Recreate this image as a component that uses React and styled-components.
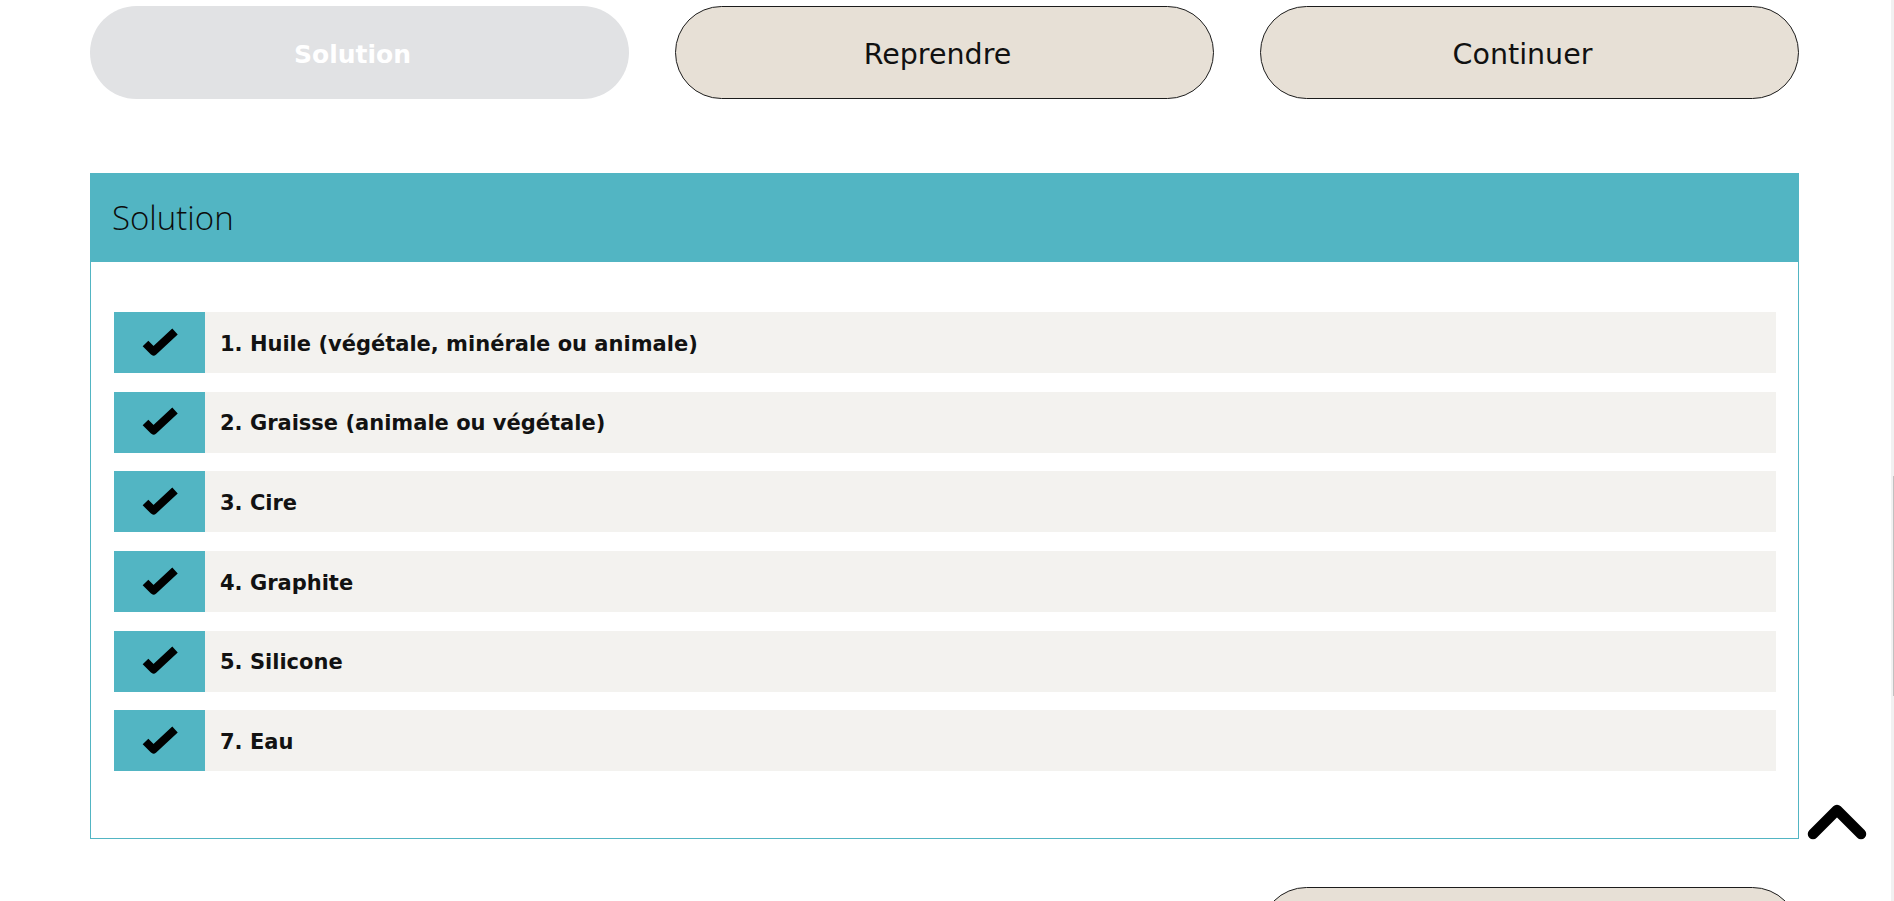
import React from "react";
import styled, { createGlobalStyle } from "styled-components";

const Global = createGlobalStyle`
  html, body {
    margin: 0;
    padding: 0;
    overflow: hidden;
    background: #ffffff;
  }
  body {
    font-family: "DejaVu Sans", "Liberation Sans", sans-serif;
    color: #111111;
  }
  * { box-sizing: border-box; }
`;

const Page = styled.div`
  width: 1894px;
  height: 901px;
  padding: 6px 0 0 90px;
`;

const Content = styled.div`
  width: 1709px;
  display: flex;
  flex-direction: column;
`;

const ButtonRow = styled.div`
  display: grid;
  grid-template-columns: repeat(3, 539px);
  column-gap: 46px;
  margin-top: ${(p) => p.$top || 0}px;
`;

const PillButton = styled.button`
  grid-column: ${(p) => p.$col || "auto"};
  height: 93px;
  border-radius: 47px;
  border: 1px solid ${(p) => (p.$disabled ? "transparent" : "#1c1c1c")};
  background: ${(p) => (p.$disabled ? "#e1e2e4" : "#e7e0d6")};
  color: ${(p) => (p.$disabled ? "#ffffff" : "#111111")};
  font-family: "DejaVu Sans", "Liberation Sans", sans-serif;
  font-size: ${(p) => (p.$disabled ? "25px" : "28.5px")};
  font-weight: ${(p) => (p.$disabled ? 700 : 400)};
  display: flex;
  align-items: center;
  justify-content: center;
  padding: 4px 14px 0 0;
  cursor: ${(p) => (p.$disabled ? "default" : "pointer")};
`;

const Panel = styled.section`
  margin-top: 74px;
  border: 1px solid #52b5c3;
  display: flex;
  flex-direction: column;
`;

const PanelHeader = styled.div`
  height: 89px;
  margin: -1px -1px 0 -1px;
  background: #52b5c3;
  display: flex;
  align-items: center;
  padding-left: 22px;
  font-family: "Open Sans", "DejaVu Sans", sans-serif;
  font-weight: 300;
  font-size: 33px;
  color: #0c0c0c;
`;

const PanelBody = styled.div`
  padding: 50px 22px 67px 23px;
  display: flex;
  flex-direction: column;
  gap: 18.7px;
`;

const Item = styled.div`
  height: 61px;
  display: flex;
  align-items: stretch;
  background: #f3f2ef;
`;

const CheckBox = styled.div`
  width: 91px;
  flex: 0 0 91px;
  background: #52b5c3;
  display: flex;
  align-items: center;
  justify-content: center;
`;

const ItemLabel = styled.div`
  display: flex;
  align-items: center;
  padding: 2px 0 0 15px;
  font-family: "DejaVu Sans", "Liberation Sans", sans-serif;
  font-weight: 700;
  font-size: 21px;
  color: #121212;
`;

const BackToTop = styled.button`
  position: fixed;
  left: 1804px;
  top: 800px;
  width: 66px;
  height: 44px;
  padding: 0;
  border: none;
  background: transparent;
  display: flex;
  align-items: center;
  justify-content: center;
  cursor: pointer;
`;

const ScrollTrack = styled.div`
  position: fixed;
  top: 0;
  right: 0;
  width: 3px;
  height: 901px;
  background: #f1f1f1;
`;

const ScrollThumb = styled.div`
  position: absolute;
  right: 0;
  top: 476px;
  width: 1px;
  height: 220px;
  background: #c1c1c1;
`;

const Check = () => (
  <svg width="40" height="32" viewBox="0 0 40 32" aria-hidden="true">
    <polyline
      points="5.5,16.5 13.5,24.5 35,4.5"
      fill="none"
      stroke="#000"
      strokeWidth="8"
      strokeLinejoin="round"
      strokeLinecap="butt"
    />
  </svg>
);

const Chevron = () => (
  <svg width="62" height="40" viewBox="0 0 62 40" aria-hidden="true">
    <polyline
      points="7,32 31,8 55,32"
      fill="none"
      stroke="#000"
      strokeWidth="10.5"
      strokeLinejoin="round"
      strokeLinecap="round"
    />
  </svg>
);

const items = [
  "1. Huile (végétale, minérale ou animale)",
  "2. Graisse (animale ou végétale)",
  "3. Cire",
  "4. Graphite",
  "5. Silicone",
  "7. Eau",
];

export default function App() {
  return (
    <>
      <Global />
      <Page>
        <Content>
          <ButtonRow>
            <PillButton $disabled disabled>
              Solution
            </PillButton>
            <PillButton>Reprendre</PillButton>
            <PillButton>Continuer</PillButton>
          </ButtonRow>

          <Panel>
            <PanelHeader>Solution</PanelHeader>
            <PanelBody>
              {items.map((t) => (
                <Item key={t}>
                  <CheckBox>
                    <Check />
                  </CheckBox>
                  <ItemLabel>{t}</ItemLabel>
                </Item>
              ))}
            </PanelBody>
          </Panel>

          <ButtonRow $top={48}>
            <PillButton $col={3} aria-label="Suivant" />
          </ButtonRow>
        </Content>
      </Page>
      <BackToTop aria-label="Haut de page">
        <Chevron />
      </BackToTop>
      <ScrollTrack>
        <ScrollThumb />
      </ScrollTrack>
    </>
  );
}
